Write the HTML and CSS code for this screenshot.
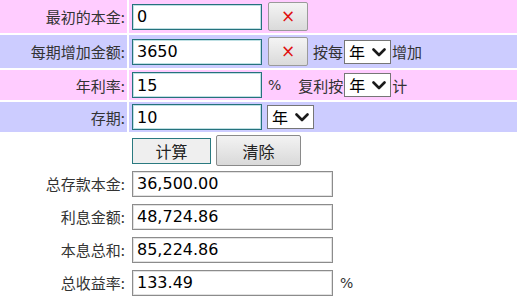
FILE: index.html
```html
<!DOCTYPE html>
<html lang="zh">
<head>
<meta charset="utf-8">
<title>复利计算器</title>
<link rel="stylesheet" href="styles.css">
</head>
<body>
<div class="form">
  <div class="row tall pink">
    <div class="lbl">最初的本金:</div>
    <div class="fld"><input class="in" value="0"><button class="clr">×</button></div>
  </div>
  <div class="row tall blue">
    <div class="lbl">每期增加金额:</div>
    <div class="fld">
      <input class="in" value="3650"><button class="clr">×</button>
      <span class="txt t-after-btn">按每</span>
      <span class="sel s-inline"><select><option>年</option></select><svg class="chev" viewBox="0 0 14 9" width="14" height="9"><path d="M1.5 1.5 L7 7 L12.5 1.5" fill="none" stroke="#1a1a1a" stroke-width="2.6" stroke-linecap="round" stroke-linejoin="round"/></svg></span>
      <span class="txt t-after-sel">增加</span>
    </div>
  </div>
  <div class="row pink">
    <div class="lbl">年利率:</div>
    <div class="fld">
      <input class="in" value="15">
      <span class="pct">%</span>
      <span class="txt t-comp">复利按</span>
      <span class="sel s-inline"><select><option>年</option></select><svg class="chev" viewBox="0 0 14 9" width="14" height="9"><path d="M1.5 1.5 L7 7 L12.5 1.5" fill="none" stroke="#1a1a1a" stroke-width="2.6" stroke-linecap="round" stroke-linejoin="round"/></svg></span>
      <span class="txt t-after-sel">计</span>
    </div>
  </div>
  <div class="row blue">
    <div class="lbl">存期:</div>
    <div class="fld">
      <input class="in" value="10">
      <span class="sel s-gap"><select><option>年</option></select><svg class="chev" viewBox="0 0 14 9" width="14" height="9"><path d="M1.5 1.5 L7 7 L12.5 1.5" fill="none" stroke="#1a1a1a" stroke-width="2.6" stroke-linecap="round" stroke-linejoin="round"/></svg></span>
    </div>
  </div>
  <div class="row tall plain">
    <div class="lbl"></div>
    <div class="fld">
      <button class="calc">计算</button>
      <button class="reset">清除</button>
    </div>
  </div>
</div>
<div class="results">
  <div class="row res">
    <div class="lbl">总存款本金:</div>
    <div class="fld"><input class="out" value="36,500.00"></div>
  </div>
  <div class="row res">
    <div class="lbl">利息金额:</div>
    <div class="fld"><input class="out" value="48,724.86"></div>
  </div>
  <div class="row res">
    <div class="lbl">本息总和:</div>
    <div class="fld"><input class="out" value="85,224.86"></div>
  </div>
  <div class="row res">
    <div class="lbl">总收益率:</div>
    <div class="fld"><input class="out" value="133.49"><span class="pct pct-out">%</span></div>
  </div>
</div>
</body>
</html>
```
FILE: styles.css
```css
* { box-sizing: border-box; }
body {
  margin: 0;
  background: #fff;
  font-family: "Noto Sans CJK SC", "Noto Sans", sans-serif;
  font-size: 15px;
  color: #333;
}
.form {
  display: flex;
  flex-direction: column;
  gap: 2px;
}
.row {
  display: grid;
  grid-template-columns: 127px 1fr;
  column-gap: 2px;
  height: 30px;
}
.row.tall { height: 33px; }
.pink > div { background: #ffccff; }
.blue > div { background: #ccccff; }
.lbl {
  display: flex;
  align-items: center;
  justify-content: flex-end;
  padding-right: 2px;
  white-space: nowrap;
  line-height: 1;
}
.fld {
  display: flex;
  align-items: center;
  padding-left: 3px;
  white-space: nowrap;
}
.in, .out {
  height: 26px;
  padding: 0 0 0 4px;
  font-family: "DejaVu Sans", Verdana, sans-serif;
  font-size: 16px;
  color: #000;
  background: #fff;
  outline: none;
}
.in {
  width: 130px;
  border: 1px solid #26727c;
  box-shadow: inset 0 0 0 1px #bfe0e4;
}
.out {
  width: 201px;
  border: 1px solid #8c8c8c;
  box-shadow: inset 0 0 0 1px #e2e2e2;
}
.clr {
  width: 40px;
  height: 29px;
  margin-left: 6px;
  border: 1px solid #9a9a9a;
  border-radius: 2px;
  background: linear-gradient(#f4f4f4, #dadada);
  color: #e01010;
  font-family: "DejaVu Sans", sans-serif;
  font-size: 17px;
  line-height: 1;
  padding: 0;
}
.txt { line-height: 1; }
.t-after-btn { margin-left: 5px; }
.t-after-sel { margin-left: 1px; }
.t-comp { margin-left: 17px; }
.pct {
  margin-left: 6px;
  font-family: "DejaVu Sans", Verdana, sans-serif;
  font-size: 14px;
  color: #333;
}
.pct-out { margin-left: 7px; }
.sel {
  position: relative;
  display: inline-block;
  width: 47px;
  height: 24px;
}
.s-inline { margin-left: 1px; }
.s-gap { margin-left: 5px; }
.sel select {
  appearance: none;
  -webkit-appearance: none;
  width: 100%;
  height: 100%;
  border: 1px solid #767676;
  border-radius: 0;
  background: #fff;
  color: #000;
  font-family: "Noto Sans CJK SC", sans-serif;
  font-size: 16px;
  padding: 0 0 0 4px;
  line-height: 1;
}
.chev {
  position: absolute;
  right: 5px;
  top: 8px;
  pointer-events: none;
}
.calc, .reset {
  font-family: "Noto Sans CJK SC", sans-serif;
  font-size: 16px;
  color: #222;
  padding: 0;
  line-height: 1;
}
.calc {
  width: 79px;
  height: 26px;
  border: 1px solid #2a7a80;
  background: #efefef;
}
.reset {
  width: 85px;
  height: 31px;
  margin-left: 5px;
  border: 1px solid #8a8a8a;
  border-radius: 2px;
  background: linear-gradient(#f3f3f3, #d9d9d9);
}
.results {
  display: flex;
  flex-direction: column;
}
.row.res { height: 33px; }
```
